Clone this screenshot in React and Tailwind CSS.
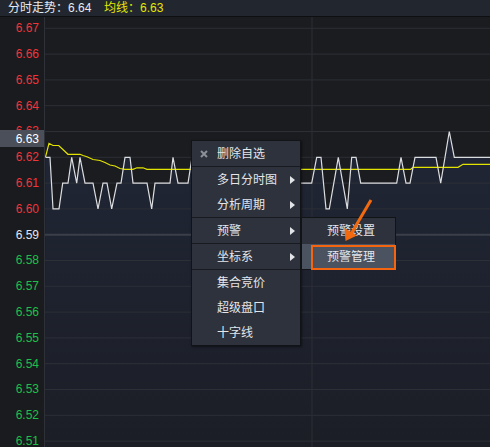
import React from "react";

const ROW = 25.8;
const TOP = 28.3;
const priceY = (p) => TOP + Math.round((6.67 - p) * 100) * ROW;

const labels = [
  "6.67", "6.66", "6.65", "6.64", "6.63", "6.62", "6.61", "6.60",
  "6.59", "6.58", "6.57", "6.56", "6.55", "6.54", "6.53", "6.52", "6.51",
];

const A = priceY(6.63);
const B = priceY(6.62);
const C = priceY(6.61);
const D = priceY(6.6);

const pricePts = [
  [45.5, B], [50, B], [53, D], [59, D], [62.7, C], [68, C], [71.7, B], [76.7, C],
  [80, B], [85, C], [93, C], [98, D], [103, C], [107, C], [111.7, D], [117, C],
  [121, C], [125, B], [130, B], [133, C], [147, C], [151.7, D], [155, C], [170, C],
  [173, B], [178, C], [188, C], [192, B], [200, B], [205, C], [240, C], [245, D],
  [250, C], [300, C], [311.7, C], [316.7, B], [321, B], [326, D], [329.3, D],
  [338.3, B], [347.3, D], [351.7, B], [356, B], [360.7, C], [396.7, C], [401, B],
  [406, C], [410, C], [415, B], [436, B], [440.7, C], [449.3, A], [454.3, B], [490, B],
];

const avgPts = [
  [45.5, 157], [49, 143.3], [53, 145.5], [58.7, 145.5], [68, 154.3], [80, 154.3],
  [83, 155.5], [87, 156.7], [93, 159.5], [100, 160.5], [105, 162.5], [110, 165],
  [115, 166], [120, 168.5], [125, 169.3], [133, 169.3], [137, 167.8], [143, 167.8],
  [147, 169.3], [410.7, 169.3], [413, 167.3], [458, 167.3], [463, 164.3], [490, 164.3],
];

const toStr = (pts) => pts.map(([x, y]) => `${x},${y}`).join(" ");

function labelColor(t) {
  if (t === "6.59") return "text-[#e3e6ec]";
  return parseFloat(t) > 6.59 ? "text-[#f0353b]" : "text-[#1cc04a]";
}

function Arrow() {
  return (
    <svg width="5" height="8" viewBox="0 0 5 8" className="absolute right-[5px] top-1/2 -translate-y-1/2">
      <polygon points="0,0 5,4 0,8" fill="#e2e4e8" />
    </svg>
  );
}

function Item({ children, arrow, icon, h = "h-[25px]" }) {
  return (
    <div className={`relative flex items-center pl-[25px] ${h}`}>
      {icon && (
        <svg width="8" height="8" viewBox="0 0 8 8" className="absolute left-[8px] top-1/2 -translate-y-1/2">
          <path d="M1 1 L7 7 M7 1 L1 7" stroke="#8b9099" strokeWidth="2" />
        </svg>
      )}
      <span>{children}</span>
      {arrow && <Arrow />}
    </div>
  );
}

function Sep() {
  return <div className="h-px bg-[#181a1f]" />;
}

export default function App() {
  const fill = toStr([...pricePts, [490, 447], [45, 447]]);
  return (
    <div
      className="relative w-[490px] h-[447px] overflow-hidden bg-[#1b1c20] flex flex-col"
      style={{ fontFamily: '"Liberation Sans", "Noto Sans CJK SC", sans-serif' }}
    >
      <div className="h-[17px] shrink-0 bg-[#22262e] border-b border-[#0e0f11] flex items-center pl-[8px] text-[12px] leading-none">
        <span className="text-[#e8eaee] w-[96px]">分时走势：6.64</span>
        <span className="text-[#e6e600]">均线：6.63</span>
      </div>

      <div className="flex flex-1 min-h-0">
        <div className="relative w-[45px] shrink-0 border-r border-[#2e3138] bg-[#1a1b1e]">
          <div className="flex flex-col mt-[-1.6px]">
            {labels.map((t) => (
              <div
                key={t}
                className={`h-[25.8px] shrink-0 flex items-center justify-end pr-[5px] text-[12px] ${labelColor(t)}`}
              >
                {t}
              </div>
            ))}
          </div>
          <div className="absolute left-0 top-[113px] w-[44px] h-[17px] bg-[#4a4f59] flex items-center justify-end pr-[5px] text-[12px] text-white">
            6.63
          </div>
        </div>

        <div className="relative flex-1">
          <svg width="445" height="430" viewBox="45 17 445 430" className="block">
            <defs>
              <linearGradient id="area" x1="0" y1="0" x2="0" y2="1">
                <stop offset="0" stopColor="#202636" />
                <stop offset="1" stopColor="#1c1e26" />
              </linearGradient>
            </defs>
            <polygon points={fill} fill="url(#area)" />
            {labels.map((t, i) => {
              const y = TOP + i * ROW;
              if (t === "6.59")
                return <line key={t} x1="45" x2="490" y1={y} y2={y} stroke="#3a3f49" strokeWidth="2" />;
              return <line key={t} x1="45" x2="490" y1={y} y2={y} stroke="#2c2f36" strokeWidth="1" />;
            })}
            <line x1="312" x2="312" y1="17" y2="447" stroke="#2c2f36" strokeWidth="1" />
            <polyline points={toStr(avgPts)} fill="none" stroke="#e3e300" strokeWidth="1.2" />
            <polyline points={toStr(pricePts)} fill="none" stroke="#dcdde0" strokeWidth="1.2" />
          </svg>
        </div>
      </div>

      <div className="absolute left-[191px] top-[140px] w-[110px] bg-[#2d323c] border border-[#111317] text-[12px] text-[#e4e6ea] shadow-[1px_1px_2px_rgba(0,0,0,0.5)]">
        <Item icon>删除自选</Item>
        <Sep />
        <Item arrow>多日分时图</Item>
        <Item arrow>分析周期</Item>
        <Sep />
        <Item arrow>预警</Item>
        <Sep />
        <Item arrow>坐标系</Item>
        <Sep />
        <Item>集合竞价</Item>
        <Item>超级盘口</Item>
        <Item>十字线</Item>
      </div>

      <div className="absolute left-[301px] top-[217px] w-[95px] bg-[#2d323c] border border-[#111317] text-[12px] text-[#e4e6ea]">
        <div className="h-[26px] flex items-center pl-[25px]">预警设置</div>
        <div className="h-[25px] flex items-center pl-[25px] bg-[#4b5260]">预警管理</div>
      </div>

      <div className="absolute left-[311px] top-[245px] w-[85px] h-[25px] border-2 border-[#f5650f]" />

      <svg width="490" height="447" className="absolute left-0 top-0 pointer-events-none">
        <line x1="371" y1="200" x2="351" y2="234" stroke="#f26a0f" strokeWidth="3" />
        <polygon points="345.5,241 344.5,228 357,235.5" fill="#f26a0f" />
      </svg>
    </div>
  );
}
